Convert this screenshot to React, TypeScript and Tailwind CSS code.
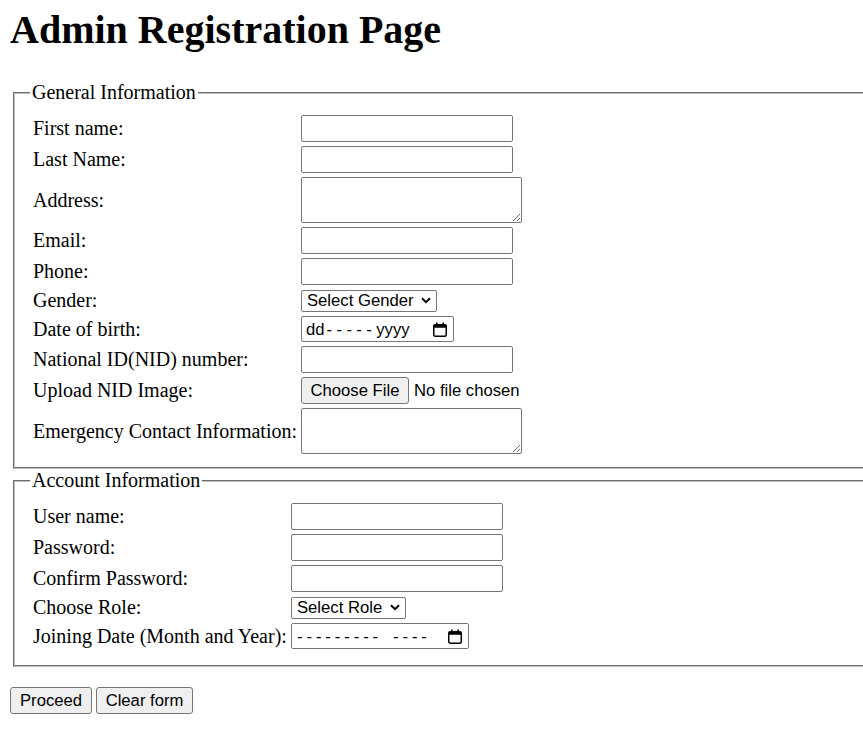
import React from "react";

const ctrlFont = "font-['Liberation_Sans',Arial,sans-serif] text-[16.67px] text-black";

function TextInput({ w = "w-[212px]" }: { w?: string }) {
  return (
    <input
      type="text"
      className={`${w} h-[27px] border border-[#767676] rounded-[2px] px-[3px] bg-white outline-none block ${ctrlFont}`}
    />
  );
}

function TextArea() {
  return (
    <textarea
      className={`w-[221px] h-[46px] border border-[#767676] rounded-[2px] px-[3px] bg-white outline-none block resize ${ctrlFont}`}
    />
  );
}

function Chevron() {
  return (
    <svg width="10" height="7" viewBox="0 0 10 7" className="shrink-0">
      <path d="M1 1.2 L5 5.2 L9 1.2" fill="none" stroke="#000" strokeWidth="2" />
    </svg>
  );
}

function Select({ label, w }: { label: string; w: string }) {
  return (
    <div
      className={`${w} h-[22px] border border-[#767676] rounded-[2px] bg-white flex items-center justify-between pl-[5px] pr-[5px] leading-[20px] ${ctrlFont}`}
    >
      <span>{label}</span>
      <Chevron />
    </div>
  );
}

function CalendarIcon() {
  return (
    <svg width="16" height="17" viewBox="0 0 16 17" className="shrink-0">
      <rect x="1.75" y="3.75" width="12.5" height="11.5" rx="1.5" fill="none" stroke="#000" strokeWidth="1.5" />
      <rect x="1.75" y="3.75" width="12.5" height="3" fill="#000" />
      <rect x="4" y="1.5" width="1.6" height="3" fill="#000" />
      <rect x="10.4" y="1.5" width="1.6" height="3" fill="#000" />
    </svg>
  );
}

function DateBox() {
  return (
    <div
      className={`w-[153px] h-[26px] border border-[#767676] rounded-[2px] bg-white flex items-center justify-between pl-[4px] pr-[5px] ${ctrlFont}`}
    >
      <span className="flex items-center whitespace-pre">
        <span>dd</span>
        <span className="tracking-[4.4px] ml-[2px]">-----</span>
        <span>yyyy</span>
      </span>
      <CalendarIcon />
    </div>
  );
}

function MonthBox() {
  return (
    <div
      className={`w-[178px] h-[26px] border border-[#767676] rounded-[2px] bg-white flex items-center justify-between pl-[5px] pr-[5px] ${ctrlFont}`}
    >
      <span className="flex items-center whitespace-pre">
        <span className="tracking-[3.9px]">---------</span>
        <span className="tracking-[3.9px] ml-[11px]">----</span>
      </span>
      <CalendarIcon />
    </div>
  );
}

function FileBox() {
  return (
    <div className={`flex items-center ${ctrlFont}`}>
      <button
        type="button"
        className="w-[108px] h-[27px] bg-[#efefef] border border-[#767676] rounded-[3px] flex items-center justify-center"
      >
        Choose File
      </button>
      <span className="ml-[5px]">No file chosen</span>
    </div>
  );
}

function Row({ label, children }: { label: string; children: React.ReactNode }) {
  return (
    <>
      <div className="text-[20px] leading-[23px]">{label}</div>
      <div className="flex items-center">{children}</div>
    </>
  );
}

function Fieldset({
  legend,
  col,
  pb,
  children,
}: {
  legend: string;
  col: string;
  pb: string;
  children: React.ReactNode;
}) {
  return (
    <fieldset className={`w-[878px] ml-[3px] border-2 [border-style:groove] border-[#c0c0c0] pt-[11px] ${pb} pl-[18px] pr-[15px]`}>
      <legend className="-ml-[3px] px-[2px] text-[20px] leading-[23px]">{legend}</legend>
      <div className={`grid ${col} gap-y-[4px] items-center justify-start`}>{children}</div>
    </fieldset>
  );
}

export default function App() {
  return (
    <div className="w-[863px] h-[755px] overflow-hidden bg-white text-black font-['Liberation_Serif','Times_New_Roman',serif] pl-[10px] pt-[8px]">
      <h1 className="text-[40px] font-bold leading-[44px] m-0 mb-[29px]">Admin Registration Page</h1>
      <form>
        <Fieldset legend="General Information" col="grid-cols-[268px_auto]" pb="pb-[13px]">
          <Row label="First name:">
            <TextInput />
          </Row>
          <Row label="Last Name:">
            <TextInput />
          </Row>
          <Row label="Address:">
            <TextArea />
          </Row>
          <Row label="Email:">
            <TextInput />
          </Row>
          <Row label="Phone:">
            <TextInput />
          </Row>
          <Row label="Gender:">
            <Select label="Select Gender" w="w-[136px]" />
          </Row>
          <Row label="Date of birth:">
            <DateBox />
          </Row>
          <Row label="National ID(NID) number:">
            <TextInput />
          </Row>
          <Row label="Upload NID Image:">
            <FileBox />
          </Row>
          <Row label="Emergency Contact Information:">
            <TextArea />
          </Row>
        </Fieldset>
        <Fieldset legend="Account Information" col="grid-cols-[258px_auto]" pb="pb-[16px]">
          <Row label="User name:">
            <TextInput />
          </Row>
          <Row label="Password:">
            <TextInput />
          </Row>
          <Row label="Confirm Password:">
            <TextInput />
          </Row>
          <Row label="Choose Role:">
            <Select label="Select Role" w="w-[115px]" />
          </Row>
          <Row label="Joining Date (Month and Year):">
            <MonthBox />
          </Row>
        </Fieldset>
        <div className={`mt-[20px] flex gap-[4px] ${ctrlFont}`}>
          <button
            type="button"
            className="w-[82px] h-[27px] bg-[#efefef] border border-[#767676] rounded-[3px] flex items-center justify-center"
          >
            Proceed
          </button>
          <button
            type="button"
            className="w-[97px] h-[27px] bg-[#efefef] border border-[#767676] rounded-[3px] flex items-center justify-center"
          >
            Clear form
          </button>
        </div>
      </form>
    </div>
  );
}
